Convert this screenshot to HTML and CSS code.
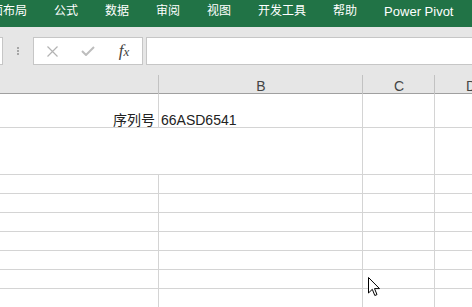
FILE: index.html
```html
<!DOCTYPE html>
<html lang="zh">
<head>
<meta charset="utf-8">
<title>Excel</title>
<link rel="stylesheet" href="styles.css">
</head>
<body>
<div class="ribbon">
  <span class="tab first">页面布局</span>
  <span class="tab">公式</span>
  <span class="tab">数据</span>
  <span class="tab">审阅</span>
  <span class="tab">视图</span>
  <span class="tab">开发工具</span>
  <span class="tab">帮助</span>
  <span class="tab latin">Power Pivot</span>
</div>
<div class="fbar">
  <div class="namebox"></div>
  <div class="grip"><i></i><i></i><i></i></div>
  <div class="fxbox">
    <div class="slot"><svg width="11" height="11" viewBox="0 0 11 11"><path d="M0.5 0.5 L10.5 10.5 M10.5 0.5 L0.5 10.5" stroke="#b3b3b3" stroke-width="1.2" fill="none"/></svg></div>
    <div class="slot"><svg width="14" height="10" viewBox="0 0 14 10"><path d="M1 5 L5 9 L13 1" stroke="#bdbdbd" stroke-width="2" fill="none"/></svg></div>
    <div class="slot"><span class="fx"><i class="f">f</i><i class="x">x</i></span></div>
  </div>
  <div class="input"></div>
</div>
<div class="colhead">
  <div class="hc"></div>
  <div class="hc">B</div>
  <div class="hc">C</div>
  <div class="hc">D</div>
</div>
<div class="sheet">
  <div class="cell r">序列号</div><div class="cell l">66ASD6541</div><div class="cell"></div><div class="cell"></div>
  <div class="cell span2"></div><div class="cell"></div><div class="cell"></div>
  <div class="cell"></div><div class="cell"></div><div class="cell"></div><div class="cell"></div>
  <div class="cell"></div><div class="cell"></div><div class="cell"></div><div class="cell"></div>
  <div class="cell"></div><div class="cell"></div><div class="cell"></div><div class="cell"></div>
  <div class="cell"></div><div class="cell"></div><div class="cell"></div><div class="cell"></div>
  <div class="cell"></div><div class="cell"></div><div class="cell"></div><div class="cell"></div>
  <div class="cell"></div><div class="cell"></div><div class="cell"></div><div class="cell"></div>
  <div class="cell"></div><div class="cell"></div><div class="cell"></div><div class="cell"></div>
</div>
<svg class="cursor" width="13" height="20" viewBox="0 0 13 20"><path d="M0.5 0.5 V16 L4.3 12.3 L6.8 18.5 L9 17.6 L6.5 11.6 H11.5 Z" fill="#fff" stroke="#000" stroke-width="1" stroke-linejoin="miter"/></svg>
</body>
</html>
```
FILE: styles.css
```css
* { box-sizing: border-box; margin: 0; padding: 0; }
html, body { width: 472px; height: 307px; overflow: hidden; }
body {
  position: relative;
  background: #fff;
  font-family: "Liberation Sans", "Noto Sans CJK SC", sans-serif;
}
.ribbon {
  height: 27px;
  background: #217346;
  color: #fff;
  display: flex;
  gap: 27px;
  padding-top: 5px;
  font-size: 12px;
  line-height: 13px;
  white-space: nowrap;
  overflow: hidden;
}
.ribbon .first { margin-left: -21px; }
.ribbon .latin { font-size: 13px; }

.fbar {
  height: 44px;
  background: #e6e6e6;
  display: flex;
  align-items: flex-start;
  padding-top: 10px;
}
.namebox {
  margin-left: -10px;
  width: 13px;
  height: 28px;
  flex: none;
  border: 1px solid #c6c6c6;
  background: #fff;
}
.grip {
  margin-left: 14px;
  width: 2px;
  height: 28px;
  flex: none;
  display: flex;
  flex-direction: column;
  gap: 1px;
  padding-top: 10px;
}
.grip i { display: block; width: 2px; height: 2px; background: #a6a6a6; }
.fxbox {
  margin-left: 14px;
  width: 110px;
  height: 28px;
  flex: none;
  border: 1px solid #c6c6c6;
  background: #fff;
  display: flex;
}
.slot {
  width: 36px;
  display: flex;
  align-items: center;
  justify-content: center;
}
.slot svg { display: block; }
.fx {
  font-family: "Liberation Serif", serif;
  font-style: italic;
  color: #444;
  line-height: 16px;
}
.fx .f { font-size: 17px; }
.fx .x { font-size: 13px; }
.input {
  margin-left: 3px;
  margin-right: -5px;
  flex: 1;
  height: 28px;
  border: 1px solid #c6c6c6;
  background: #fff;
}

.colhead {
  display: grid;
  grid-template-columns: 159px 204px 72px 72px;
  height: 23px;
  background: #e6e6e6;
  border-bottom: 1px solid #a0a0a0;
}
.hc {
  text-align: center;
  font-size: 14px;
  line-height: 16px;
  padding-top: 7px;
  color: #444;
  background: linear-gradient(#c2c2c2, #c2c2c2) right bottom / 1px calc(100% - 4px) no-repeat;
}

.sheet {
  display: grid;
  grid-template-columns: 159px 204px 72px 72px;
  grid-template-rows: 34px 47px repeat(7, 19px);
}
.cell {
  border-right: 1px solid #d4d4d4;
  border-bottom: 1px solid #d4d4d4;
  display: flex;
  align-items: flex-end;
  font-size: 14px;
  line-height: 14px;
  color: #222;
  white-space: nowrap;
}
.cell.r { justify-content: flex-end; padding-right: 3px; }
.cell.l { padding-left: 2px; }
.cell.span2 { grid-column: span 2; }

.cursor { position: absolute; left: 368px; top: 277px; }
```
